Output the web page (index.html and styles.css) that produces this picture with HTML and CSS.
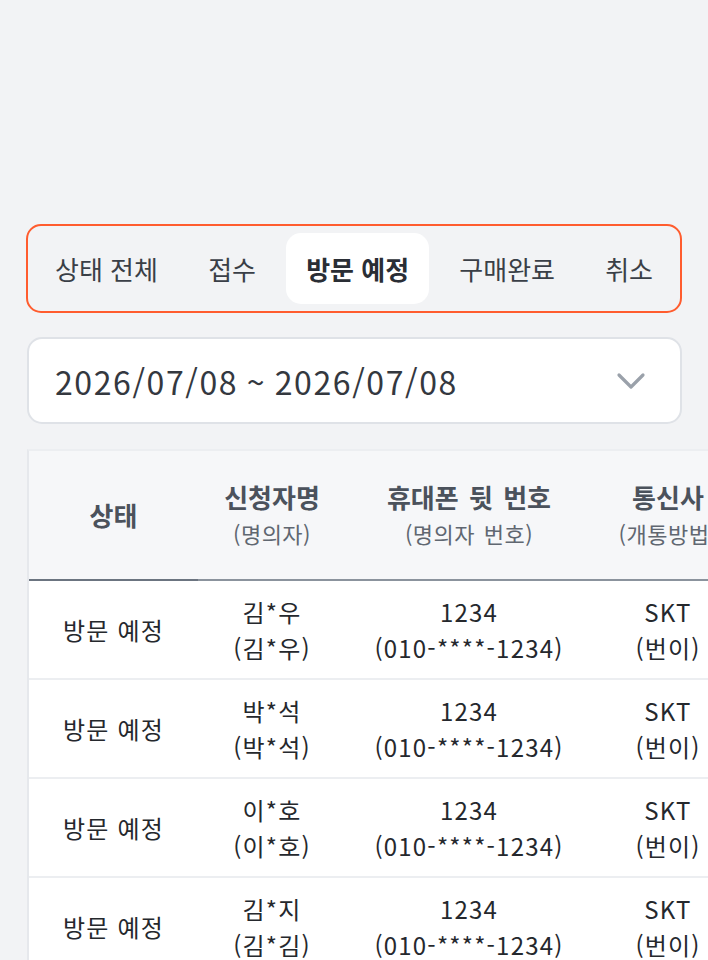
FILE: index.html
```html
<!DOCTYPE html>
<html lang="ko">
<head>
<meta charset="utf-8">
<title>방문 예정</title>
<link rel="stylesheet" href="styles.css">
</head>
<body>
<div class="page">
  <nav class="tabs">
    <button class="tab">상태 전체</button>
    <button class="tab">접수</button>
    <button class="tab active">방문 예정</button>
    <button class="tab">구매완료</button>
    <button class="tab">취소</button>
  </nav>

  <div class="date-select">
    <span class="date-text">2026/07/08 ~ 2026/07/08</span>
    <svg class="chevron" width="30" height="20" viewBox="0 0 30 20" fill="none">
      <path d="M3 4 L15 16 L27 4" stroke="#9aa1aa" stroke-width="3.2" stroke-linecap="round" stroke-linejoin="round"/>
    </svg>
  </div>

  <div class="table-wrap">
    <table class="list">
      <colgroup>
        <col class="c1"><col class="c2"><col class="c3"><col class="c4">
      </colgroup>
      <thead>
        <tr>
          <th class="first"><span class="h-main">상태</span></th>
          <th><span class="h-main">신청자명</span><span class="h-sub">(명의자)</span></th>
          <th><span class="h-main">휴대폰 뒷 번호</span><span class="h-sub">(명의자 번호)</span></th>
          <th><span class="h-main">통신사</span><span class="h-sub">(개통방법)</span></th>
        </tr>
      </thead>
      <tbody>
        <tr>
          <td>방문 예정</td>
          <td><span class="l1">김*우</span><span class="l2">(김*우)</span></td>
          <td><span class="l1">1234</span><span class="l2">(010-****-1234)</span></td>
          <td><span class="l1">SKT</span><span class="l2">(번이)</span></td>
        </tr>
        <tr>
          <td>방문 예정</td>
          <td><span class="l1">박*석</span><span class="l2">(박*석)</span></td>
          <td><span class="l1">1234</span><span class="l2">(010-****-1234)</span></td>
          <td><span class="l1">SKT</span><span class="l2">(번이)</span></td>
        </tr>
        <tr>
          <td>방문 예정</td>
          <td><span class="l1">이*호</span><span class="l2">(이*호)</span></td>
          <td><span class="l1">1234</span><span class="l2">(010-****-1234)</span></td>
          <td><span class="l1">SKT</span><span class="l2">(번이)</span></td>
        </tr>
        <tr>
          <td>방문 예정</td>
          <td><span class="l1">김*지</span><span class="l2">(김*김)</span></td>
          <td><span class="l1">1234</span><span class="l2">(010-****-1234)</span></td>
          <td><span class="l1">SKT</span><span class="l2">(번이)</span></td>
        </tr>
      </tbody>
    </table>
  </div>
</div>
</body>
</html>
```

FILE: styles.css
```css
html, body {
  margin: 0;
  padding: 0;
  background: #f2f3f5;
  overflow: hidden;
}
body {
  font-family: "Noto Sans CJK KR", "Noto Sans", sans-serif;
  color: #2b2f36;
}
.page {
  padding: 224px 26px 0 26px;
  display: flex;
  flex-direction: column;
}
.tabs {
  display: flex;
  justify-content: space-between;
  align-items: stretch;
  border: 2px solid #ff5c2e;
  border-radius: 15px;
  padding: 7px;
  height: 71px;
  box-sizing: content-box;
}
.tab {
  font-family: inherit;
  font-size: 26px;
  font-weight: 400;
  color: #3a3f47;
  background: transparent;
  border: 0;
  border-radius: 15px;
  padding: 0 20px;
  letter-spacing: 0;
}
.tab.active {
  background: #ffffff;
  font-weight: 700;
  color: #2a2e35;
}
.date-select {
  margin-top: 24px;
  margin-left: 1px;
  height: 83px;
  background: #fff;
  border: 2px solid #dfe2e7;
  border-radius: 15px;
  display: flex;
  align-items: center;
  justify-content: space-between;
  padding: 0 34px 0 26px;
}
.date-text {
  font-size: 32px;
  color: #34383f;
  letter-spacing: 1.6px;
  word-spacing: -2px;
}
.chevron {
  display: block;
}
.table-wrap {
  margin-top: 25px;
  margin-left: 1px;
  margin-right: -26px;
  overflow: hidden;
  border-left: 2px solid #e6e8ec;
  border-top: 2px solid #eceef1;
}
.list {
  border-collapse: collapse;
  table-layout: fixed;
  width: 715px;
}
.c1 { width: 169px; }
.c2 { width: 148px; }
.c3 { width: 246px; }
.c4 { width: 152px; }
.list thead th {
  background: #f6f7f9;
  height: 128px;
  padding: 0;
  text-align: center;
  vertical-align: middle;
  border-bottom: 2px solid #8b939d;
  font-weight: 700;
  white-space: nowrap;
}
.list thead th.first {
  border-bottom-color: #6b7480;
}
.h-main {
  display: block;
  font-size: 26px;
  line-height: 36px;
  color: #4b525c;
  word-spacing: 3px;
}
.h-sub {
  display: block;
  font-size: 22px;
  line-height: 36px;
  font-weight: 400;
  color: #606771;
  letter-spacing: 0.5px;
  word-spacing: 2px;
}
.list tbody td {
  background: #fff;
  height: 97px;
  padding: 0;
  text-align: center;
  vertical-align: middle;
  border-bottom: 2px solid #eceef1;
  font-size: 24px;
  color: #25282d;
  white-space: nowrap;
  letter-spacing: 1.2px;
}
.l1, .l2 {
  display: block;
  line-height: 36px;
}
```
